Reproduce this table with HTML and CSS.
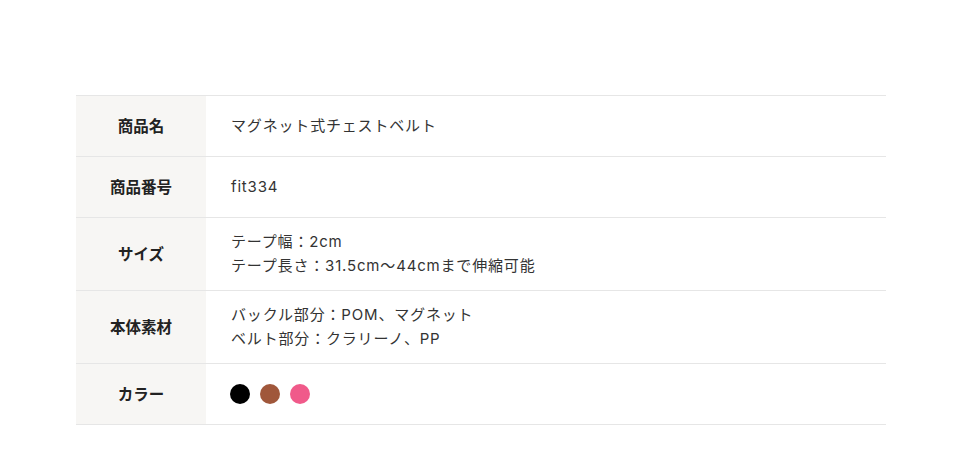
FILE: index.html
```html
<!DOCTYPE html>
<html lang="ja">
<head>
<meta charset="utf-8">
<link rel="stylesheet" href="styles.css">
</head>
<body>
<div class="page">
  <table class="spec">
    <tr><th>商品名</th><td>マグネット式チェストベルト</td></tr>
    <tr><th>商品番号</th><td>fit334</td></tr>
    <tr><th>サイズ</th><td>テープ幅：2cm<br>テープ長さ：31.5cm～44cmまで伸縮可能</td></tr>
    <tr><th>本体素材</th><td>バックル部分：POM、マグネット<br>ベルト部分：クラリーノ、PP</td></tr>
    <tr><th>カラー</th><td><div class="colors"><span class="dot black"></span><span class="dot brown"></span><span class="dot pink"></span></div></td></tr>
  </table>
</div>
</body>
</html>
```

FILE: styles.css
```css
html, body { margin: 0; padding: 0; background: #fff; }
body { font-family: Inter, "Noto Sans CJK JP", sans-serif; color: #333; }
.page { width: 810px; margin-left: 76px; padding-top: 95px; }
.spec { width: 100%; border-collapse: collapse; border-top: 1px solid #e6e6e6; }
.spec tr { border-bottom: 1px solid #e6e6e6; }
.spec th { width: 130px; background: #f7f6f4; font-family: "Noto Sans CJK JP", sans-serif; font-size: 15.5px; font-weight: 700; color: #222; text-align: center; vertical-align: middle; height: 61px; padding: 0 0 3px; box-sizing: border-box; }
.spec td { font-size: 15px; letter-spacing: 0.055em; line-height: 24px; padding: 12px 25px; height: 61px; box-sizing: border-box; vertical-align: middle; color: #333; }
.colors { display: flex; gap: 10px; align-items: center; margin-left: -1px; margin-top: -1px; }
.dot { width: 20px; height: 20px; border-radius: 50%; display: block; }
.black { background: #000; }
.brown { background: #a0573b; }
.pink { background: #f05a8a; }
```
